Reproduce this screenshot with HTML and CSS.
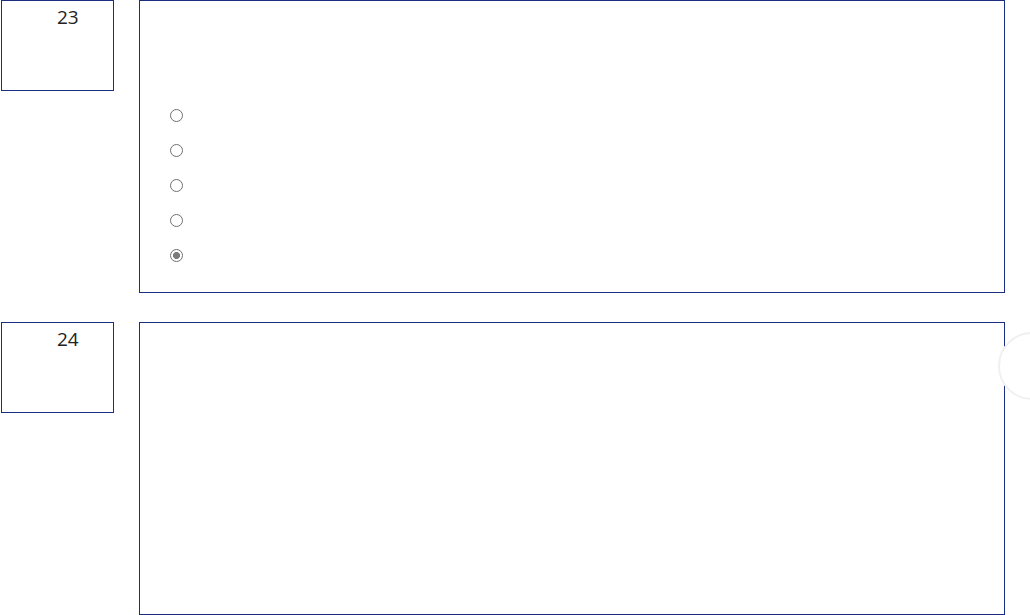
FILE: index.html
```html
<!DOCTYPE html>
<html lang="en">
  <head>
    <meta charset="UTF-8" />
    <meta name="viewport" content="width=device-width, initial-scale=1.0" />
    <title>Quiz</title>
    <link rel="stylesheet" href="styles.css">
  </head>
  <body>
    <div class="question">
      <div class="q-num">23</div>
      <div class="q-body">
        <div class="q-text"></div>
        <ul class="options">
          <li><input type="radio" name="q23" disabled /></li>
          <li><input type="radio" name="q23" disabled /></li>
          <li><input type="radio" name="q23" disabled /></li>
          <li><input type="radio" name="q23" disabled /></li>
          <li><input type="radio" name="q23" checked disabled /></li>
        </ul>
      </div>
    </div>
    <div class="question">
      <div class="q-num">24</div>
      <div class="q-body">
        <div class="q-text"></div>
      </div>
    </div>
    <button class="float-btn" aria-label="scroll"></button>
  </body>
</html>
```

FILE: styles.css
```css
body {
  margin: 0;
  background: #fff;
  font-family: "Open Sans", "Noto Sans", sans-serif;
  color: #222;
  overflow: hidden;
}
.question {
  display: flex;
  gap: 25px;
  margin-bottom: 29px;
  padding-left: 1px;
}
.q-num {
  box-sizing: border-box;
  width: 113px;
  height: 91px;
  border: 1px solid #1b2d80;
  padding: 3px 0 0 55px;
  font-size: 19px;
}
.q-body {
  box-sizing: border-box;
  width: 866px;
  height: 293px;
  border: 1px solid #1b2d80;
}
.q-text {
  height: 97px;
}
.options {
  list-style: none;
  margin: 0;
  padding: 0 0 0 30px;
}
.options li {
  height: 35px;
  display: flex;
  align-items: center;
}
.options input {
  -webkit-appearance: none;
  appearance: none;
  box-sizing: border-box;
  margin: 0;
  width: 13px;
  height: 13px;
  border: 1px solid #707070;
  border-radius: 50%;
  background: #fff;
}
.options input:checked {
  background: radial-gradient(circle, #7a7a7a 0 3.2px, #fff 3.8px);
}
.float-btn {
  position: fixed;
  left: 998px;
  top: 332px;
  width: 68px;
  height: 68px;
  border-radius: 50%;
  border: 2px solid #f0f0f0;
  background: #fff;
  padding: 0;
}
```
